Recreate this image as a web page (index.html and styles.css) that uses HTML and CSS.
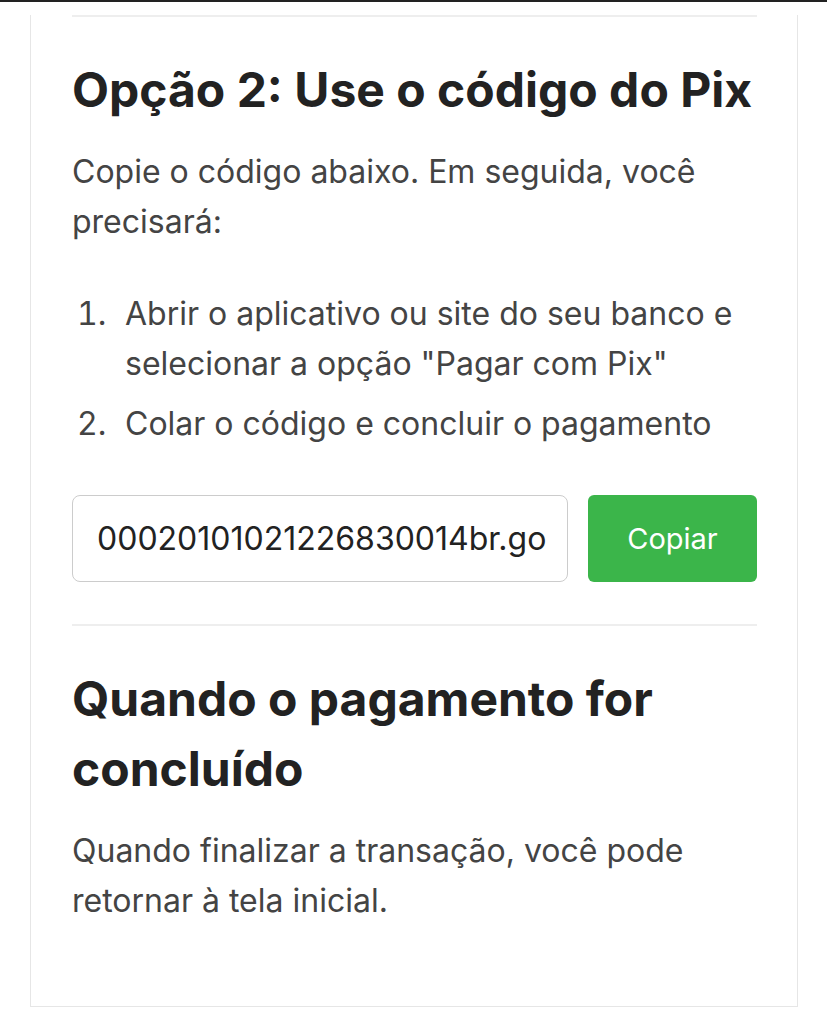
FILE: index.html
```html
<!DOCTYPE html>
<html lang="pt-BR">

<head>
    <meta charset="UTF-8">
    <meta name="viewport" content="width=device-width, initial-scale=1.0">
    <title>Pagamento Pix</title>
    <link rel="stylesheet" href="styles.css">
</head>

<body>
    <div class="card">
        <hr class="divider">

        <h2 class="title">Opção 2: Use o código do Pix</h2>
        <p class="text">Copie o código abaixo. Em seguida, você precisará:</p>

        <ol class="steps">
            <li>Abrir o aplicativo ou site do seu banco e selecionar a opção "Pagar com Pix"</li>
            <li>Colar o código e concluir o pagamento</li>
        </ol>

        <div class="code-row">
            <input type="text" class="code-input" value="00020101021226830014br.go" readonly>
            <button class="copy-button">Copiar</button>
        </div>

        <hr class="divider divider-bottom">

        <h2 class="title">Quando o pagamento for concluído</h2>
        <p class="text">Quando finalizar a transação, você pode retornar à tela inicial.</p>
    </div>
</body>

</html>
```

FILE: styles.css
```css
body {
    margin: 0;
    font-family: Inter, "Noto Sans", sans-serif;
    background-color: #fff;
    border-top: 2px solid #222;
}

.card {
    width: 685px;
    margin-left: 30px;
    padding: 0 40px 80px 41px;
    border: 1px solid #e6e6e6;
    border-top: none;
}

.divider {
    border: none;
    border-top: 2px solid #eeeeee;
    margin: 13px 0 0;
}

.title {
    font-size: 48px;
    font-weight: 700;
    line-height: 70px;
    color: #222;
    margin: 38px 0 0;
}

.text {
    font-size: 32px;
    line-height: 50px;
    color: #444;
    margin: 22px 0 0;
}

.steps {
    font-size: 32px;
    line-height: 50px;
    color: #444;
    margin: 42px 0 0;
    padding: 0;
    list-style: none;
    counter-reset: step;
}

.steps li {
    display: flex;
    counter-increment: step;
}

.steps li::before {
    content: counter(step) ".";
    width: 48px;
    padding-left: 5px;
    flex-shrink: 0;
    font-variant-numeric: tabular-nums;
}

.steps li + li {
    margin-top: 10px;
}

.code-row {
    display: flex;
    gap: 20px;
    margin-top: 46px;
}

.code-input {
    flex: 1;
    min-width: 0;
    height: 87px;
    box-sizing: border-box;
    padding: 0 16px 0 24px;
    border: 1px solid #ccc;
    border-radius: 8px;
    font-family: Inter, "Noto Sans", sans-serif;
    font-size: 32px;
    color: #222;
}

.copy-button {
    width: 169px;
    height: 87px;
    border: none;
    border-radius: 6px;
    background-color: #3bb54a;
    color: #fff;
    font-family: Inter, "Noto Sans", sans-serif;
    font-size: 29px;
}

.divider-bottom {
    margin-top: 42px;
}
```
